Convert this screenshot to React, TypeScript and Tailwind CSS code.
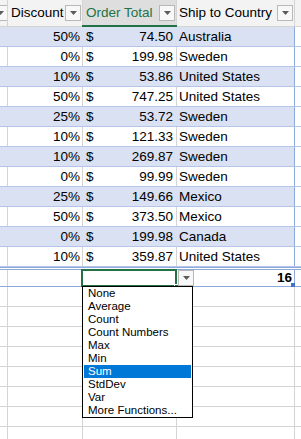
import React from 'react';

const rows = [
  ['50%', '74.50', 'Australia'],
  ['0%', '199.98', 'Sweden'],
  ['10%', '53.86', 'United States'],
  ['50%', '747.25', 'United States'],
  ['25%', '53.72', 'Sweden'],
  ['10%', '121.33', 'Sweden'],
  ['10%', '269.87', 'Sweden'],
  ['0%', '99.99', 'Sweden'],
  ['25%', '149.66', 'Mexico'],
  ['50%', '373.50', 'Mexico'],
  ['0%', '199.98', 'Canada'],
  ['10%', '359.87', 'United States'],
];

const menu = ['None', 'Average', 'Count', 'Count Numbers', 'Max', 'Min', 'Sum', 'StdDev', 'Var', 'More Functions...'];

function Drop({ className = '' }: { className?: string }) {
  return (
    <div className={`w-[16px] h-[16px] shrink-0 border border-[#b8b8b8] bg-[#f8f8f8] flex items-center justify-center ${className}`}>
      <svg width="7" height="4" viewBox="0 0 7 4">
        <path d="M0 0 H7 L3.5 4 Z" fill="#5c5c5c" />
      </svg>
    </div>
  );
}

function App() {
  return (
    <div className="relative w-[301px] h-[439px] overflow-hidden bg-white text-black font-['Liberation_Sans',Arial,sans-serif] text-[13.5px]">
      {/* header */}
      <div className="flex h-[27px] bg-[#f3f3f3] border-b border-[#d4d4d4]">
        <div className="w-[8px] border-r border-[#d4d4d4] flex items-center justify-end overflow-hidden">
          <Drop className="-mr-[1px]" />
        </div>
        <div className="w-[75px] border-r border-[#d4d4d4] flex items-center pl-[3px] pr-[1px]">
          <span className="flex-1">Discount</span>
          <Drop />
        </div>
        <div className="relative w-[94px] bg-[#dedede] border-r border-[#d4d4d4] flex items-center pl-[3px] pr-[1px] text-[#217346]">
          <span className="flex-1">Order Total</span>
          <Drop />
          <div className="absolute left-[-1px] right-[-1px] bottom-[-1px] h-[2px] bg-[#217346]" />
        </div>
        <div className="w-[118px] border-r border-[#d4d4d4] flex items-center pl-[2px] pr-[1px]">
          <span className="flex-1">Ship to Country</span>
          <Drop />
        </div>
        <div className="flex-1" />
      </div>

      {/* body */}
      {rows.map((r, i) => {
        const band = i % 2 === 0;
        const grid = band ? 'border-r border-transparent' : 'border-r border-[#d4d4d4]';
        return (
          <div key={i} className={`flex h-[20px] leading-[20px] border-b border-[#b4c6e7] ${band ? 'bg-[#d9e1f2]' : 'bg-white'}`}>
            <div className={`w-[8px] ${grid}`} />
            <div className={`w-[75px] text-right pr-[2px] ${grid}`}>{r[0]}</div>
            <div className={`w-[94px] flex pl-[3px] pr-[3px] ${grid}`}>
              <span>$</span>
              <span className="flex-1 text-right">{r[1]}</span>
            </div>
            <div className="w-[118px] pl-[2px] border-r border-[#8ea9db]">{r[2]}</div>
            <div className="flex-1 bg-white" />
          </div>
        );
      })}

      {/* total row */}
      <div className="flex h-[20px] border-t-[3px] border-double border-b border-[#8ea9db] bg-white">
        <div className="w-[8px] border-r border-[#d4d4d4]" />
        <div className="w-[75px] border-r border-[#d4d4d4]" />
        <div className="relative w-[94px] border-r border-[#d4d4d4]">
          <div className="absolute left-[-2px] top-[-1px] right-[-1px] bottom-[-1px] border-2 border-[#217346]" />
          <div className="absolute right-[-3px] bottom-[-3px] w-[5px] h-[5px] bg-[#217346] border border-white" />
        </div>
        <div className="relative w-[118px] flex items-center border-r border-[#8ea9db]">
          <Drop className="ml-[1px]" />
          <span className="flex-1 text-right pr-[2px] font-bold leading-[16px]">16</span>
          <div className="absolute right-[-1px] bottom-[-1px] w-[4px] h-[4px] bg-[#4472c4]" />
        </div>
        <div className="flex-1" />
      </div>

      {/* empty sheet rows */}
      {Array.from({ length: 8 }).map((_, i) => (
        <div key={i} className="flex h-[20px] border-b border-[#d4d4d4]">
          <div className="w-[8px] border-r border-[#d4d4d4]" />
          <div className="w-[75px] border-r border-[#d4d4d4]" />
          <div className="w-[94px] border-r border-[#d4d4d4]" />
          <div className="w-[118px] border-r border-[#d4d4d4]" />
          <div className="flex-1" />
        </div>
      ))}

      {/* aggregate menu */}
      <div className="absolute left-[82px] top-[286px] w-[111px] bg-white border border-black px-[1px] text-[11.5px]">
        {menu.map(m => (
          <div
            key={m}
            className={`h-[13px] leading-[13px] pl-[4px] whitespace-nowrap ${m === 'Sum' ? 'bg-[#0078d7] text-white' : 'text-black'}`}
          >
            {m}
          </div>
        ))}
      </div>
    </div>
  );
}

export default App;
